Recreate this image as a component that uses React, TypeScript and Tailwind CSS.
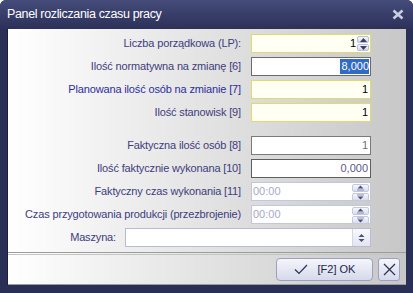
import React from "react";

const font = { fontFamily: '"Liberation Sans", Arial, sans-serif' };

const SpinSmall = () => (
  <div className="flex h-full w-[13px] flex-col gap-[1px] py-[1px] pr-[1px]">
    <div className="flex flex-1 items-center justify-center rounded-[2px] border border-[#b9bdd6] bg-gradient-to-b from-[#f6f7fc] to-[#d5d9ea]">
      <svg width="7" height="4" viewBox="0 0 7 4">
        <path d="M0 4 L3.5 0 L7 4 Z" fill="#3a3f63" />
      </svg>
    </div>
    <div className="flex flex-1 items-center justify-center rounded-[2px] border border-[#b9bdd6] bg-gradient-to-b from-[#f6f7fc] to-[#d5d9ea]">
      <svg width="7" height="4" viewBox="0 0 7 4">
        <path d="M0 0 L3.5 4 L7 0 Z" fill="#3a3f63" />
      </svg>
    </div>
  </div>
);

const SpinTime = () => (
  <div className="flex h-full w-[18px] flex-col gap-[1px] py-[1px] pr-[1px]">
    {["up", "down"].map((d) => (
      <div
        key={d}
        className="flex flex-1 items-center justify-center rounded-[2px] border border-[#c4c8de] bg-gradient-to-b from-[#f7f8fd] to-[#d9dcec]"
      >
        <svg width="9" height="6" viewBox="0 0 9 6">
          {d === "up" ? (
            <>
              <path d="M1.5 3.5 L4.5 0.5 L7.5 3.5 Z" fill="#4b5076" />
              <rect x="1" y="4.5" width="7" height="1" fill="#8a8fb0" />
            </>
          ) : (
            <>
              <rect x="1" y="0.5" width="7" height="1" fill="#8a8fb0" />
              <path d="M1.5 2.5 L4.5 5.5 L7.5 2.5 Z" fill="#4b5076" />
            </>
          )}
        </svg>
      </div>
    ))}
  </div>
);

const Row = ({
  label,
  color = "text-[#3d3d7c]",
  children,
}: {
  label: string;
  color?: string;
  children: React.ReactNode;
}) => (
  <div className="flex h-[23px] items-center">
    <div className={`w-[233px] text-right text-[11px] tracking-[-0.15px] ${color}`}>{label}</div>
    <div className="ml-[10px] h-[19px] w-[120px]">{children}</div>
  </div>
);

export default function App() {
  return (
    <div
      className="relative flex h-[293px] w-[413px] flex-col overflow-hidden rounded-t-[6px] bg-[#2a2f55]"
      style={font}
    >
      {/* title bar */}
      <div className="flex h-[29px] items-center justify-between bg-gradient-to-b from-[#454c7a] to-[#2c3159] pl-[7px] pr-[9px]">
        <span className="text-[12.5px] tracking-[-0.35px] text-white">Panel rozliczania czasu pracy</span>
        <svg width="12" height="11" viewBox="0 0 12 11">
          <path d="M1.5 1.5 L10.5 9.5 M10.5 1.5 L1.5 9.5" stroke="#c9cde2" strokeWidth="2.6" />
        </svg>
      </div>

      {/* content */}
      <div className="mx-[7px] flex h-[256px] flex-col border-l border-[#1c2040] bg-gradient-to-r from-white to-[#c7c7c7]">
        <div className="flex h-[224px] flex-col border-b border-[#9c9c9c] pt-[3px]">
          <Row label="Liczba porządkowa (LP):">
            <div className="flex h-full border border-[#e3da6c] bg-[#fffff4]">
              <div className="flex-1 pr-[1px] text-right text-[11px] leading-[17px] text-black">1</div>
              <SpinSmall />
            </div>
          </Row>
          <Row label="Ilość normatywna na zmianę [6]">
            <div className="flex h-full justify-end border border-[#6b6b6b] bg-white pr-[1px] pt-[1px]">
              <span className="h-[15px] bg-[#3169c6] pl-[1px] text-[11px] leading-[15px] text-white">8,000</span>
            </div>
          </Row>
          <Row label="Planowana ilość osób na zmianie [7]" color="text-[#2d2d9c]">
            <div className="h-full border border-[#e3da6c] bg-[#fffff4] pr-[2px] text-right text-[11px] leading-[17px] text-black">
              1
            </div>
          </Row>
          <Row label="Ilość stanowisk [9]">
            <div className="h-full border border-[#e3da6c] bg-[#fffff4] pr-[2px] text-right text-[11px] leading-[17px] text-black">
              1
            </div>
          </Row>

          <div className="h-[10px]" />

          <Row label="Faktyczna ilość osób [8]">
            <div className="h-full border border-[#7a7a7a] bg-white pr-[2px] text-right text-[11px] leading-[17px] text-[#707070]">
              1
            </div>
          </Row>
          <Row label="Ilość faktycznie wykonana [10]">
            <div className="h-full border border-[#5e5e5e] bg-white pr-[2px] text-right text-[11px] leading-[17px] text-[#5a5a86]">
              0,000
            </div>
          </Row>
          <Row label="Faktyczny czas wykonania [11]">
            <div className="flex h-full border border-[#c3c7dd] bg-white">
              <div className="flex-1 pl-[1px] text-[11px] leading-[17px] text-[#a7a9c6]">00:00</div>
              <SpinTime />
            </div>
          </Row>
          <Row label="Czas przygotowania produkcji (przezbrojenie)">
            <div className="flex h-full border border-[#c3c7dd] bg-white">
              <div className="flex-1 pl-[1px] text-[11px] leading-[17px] text-[#a7a9c6]">00:00</div>
              <SpinTime />
            </div>
          </Row>

          <div className="flex h-[23px] items-center">
            <div className="w-[108px] text-right text-[11px] tracking-[-0.15px] text-[#3d3d7c]">Maszyna:</div>
            <div className="ml-[9px] flex h-[19px] w-[246px] border border-[#b7bbd6] bg-white">
              <div className="flex-1" />
              <div className="flex w-[18px] items-center justify-center border-l border-[#d3d6e6] bg-gradient-to-b from-[#f8f9fd] to-[#e2e4f0]">
                <svg width="7" height="10" viewBox="0 0 7 10">
                  <path d="M0.5 4 L3.5 1 L6.5 4 Z M0.5 6 L3.5 9 L6.5 6 Z" fill="#4b5076" />
                </svg>
              </div>
            </div>
          </div>
        </div>

        {/* footer */}
        <div className="mt-[1px] flex flex-1 items-center justify-end gap-[5px] border-t border-b border-t-[#c4c4c4] border-b-[#9c9c9c] pr-[6px]">
          <button className="flex h-[23px] w-[97px] items-center justify-center gap-[10px] rounded-[4px] border border-[#9ba1c2] bg-gradient-to-b from-[#f5f6fb] to-[#d5d9ea] text-[11px] text-[#23264a]">
            <svg width="14" height="11" viewBox="0 0 14 11">
              <path d="M1 5.5 L5 9.5 L13 1" fill="none" stroke="#2c2f52" strokeWidth="1.2" />
            </svg>
            <span>[F2] OK</span>
          </button>
          <button className="flex h-[23px] w-[22px] items-center justify-center rounded-[3px] border border-[#9ba1c2] bg-gradient-to-b from-[#f5f6fb] to-[#d5d9ea]">
            <svg width="13" height="13" viewBox="0 0 13 13">
              <path d="M1 1 L12 12 M12 1 L1 12" stroke="#2c2f52" strokeWidth="1.2" />
            </svg>
          </button>
        </div>
      </div>
    </div>
  );
}
